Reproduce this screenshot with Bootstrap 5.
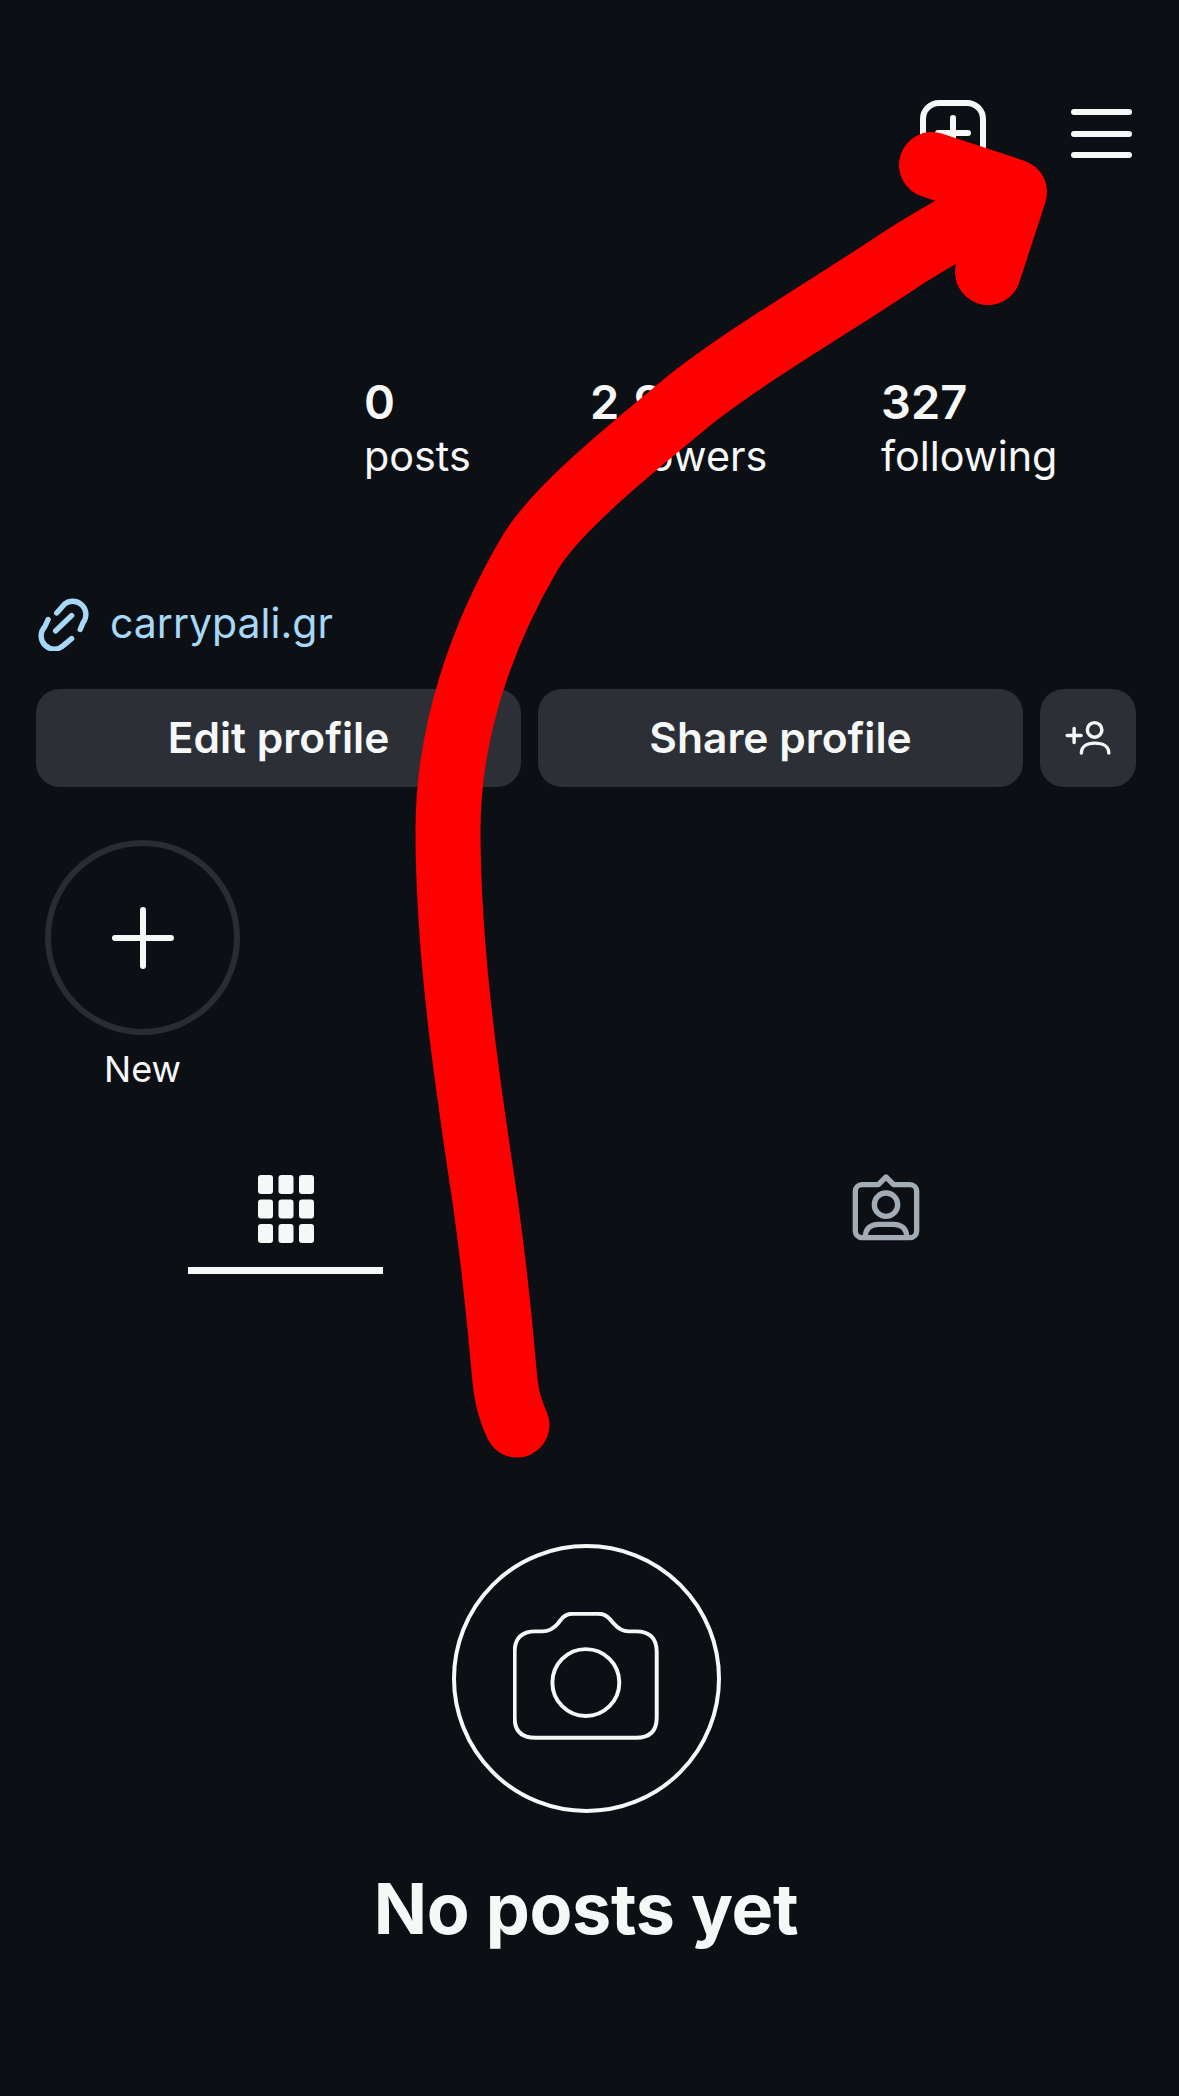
<!DOCTYPE html>
<html lang="en">

<head>
    <meta charset="UTF-8">
    <meta name="viewport" content="width=device-width, initial-scale=1.0">
    <title>Profile</title>
    <link rel="stylesheet" href="https://cdn.jsdelivr.net/npm/bootstrap@5.3.3/dist/css/bootstrap.min.css">
    <script src="https://cdn.jsdelivr.net/npm/bootstrap@5.3.3/dist/js/bootstrap.bundle.min.js"></script>
    <style>
        html, body { background: #0c1015; }
        body { font-family: Inter, "Liberation Sans", sans-serif; color: #f6f8f8; width: 1179px; height: 2096px; overflow: hidden; position: relative; }
        .top-icons { height: 100px; margin-top: 100px; padding-right: 47px; gap: 85px; }
        .hamburger { margin-top: 9px; }
        .stats { margin-top: 175px; padding-left: 364px; height: 110px; }
        .stat-num { font-size: 47px; font-weight: 600; line-height: 54px; }
        .stat-label { font-size: 41.3px; line-height: 54px; }
        .stat-a { width: 226px; }
        .stat-b { width: 291px; }
        .site-link { margin-top: 113px; padding-left: 36px; gap: 17px; height: 50px; color: #a8d8f8; font-size: 41px; line-height: 50px; }
        .btn-row { margin-top: 41px; padding-left: 36px; padding-right: 43px; gap: 17px; }
        .btn-dark-ig { background: #2c3036; color: #f6f8f8; border: 0; border-radius: 24px; height: 98px; font-size: 42.5px; font-weight: 600; padding: 0; }
        .btn-dark-ig:hover { background: #2c3036; color: #f6f8f8; }
        .btn-wide { width: 485px; }
        .btn-small { width: 96px; }
        .story-col { width: 195px; margin-left: 45px; margin-top: 53px; }
        .story-ring { width: 195px; height: 195px; border: 6px solid #292c31; border-radius: 50%; }
        .story-text { font-size: 36px; line-height: 40px; margin-top: 14px; }
        .tabs-row { margin-top: 86px; height: 99px; }
        .tab-one { width: 195px; margin-left: 188px; height: 99px; border-bottom: 7px solid #f6f8f8; }
        .tab-two { margin-left: 467px; margin-top: -3px; }
        .empty-col { margin-top: 270px; padding-right: 7px; }
        .empty-ring { width: 269px; height: 269px; border: 4.5px solid #f6f8f8; border-radius: 50%; }
        .camera-icon { margin-bottom: 6px; }
        .empty-title { font-size: 70px; font-weight: 700; line-height: 84px; margin-top: 54px; letter-spacing: -.3px; }
        .arrow-layer { position: absolute; left: 0; top: 0; pointer-events: none; }
    </style>
</head>

<body>
    <header class="d-flex justify-content-end align-items-start top-icons">
        <svg width="66" height="66" viewBox="0 0 66 66" fill="none" stroke="#f6f8f8" stroke-width="6" stroke-linecap="round">
            <rect x="3" y="3" width="60" height="60" rx="16"></rect>
            <path d="M33 18V48M18 33H48"></path>
        </svg>
        <svg class="hamburger" width="61" height="50" viewBox="0 0 61 50" fill="none" stroke="#f6f8f8" stroke-width="6" stroke-linecap="round">
            <path d="M3 3H58M3 25H58M3 46H58"></path>
        </svg>
    </header>

    <section class="d-flex stats">
        <div class="stat-a">
            <div class="stat-num">0</div>
            <div class="stat-label">posts</div>
        </div>
        <div class="stat-b">
            <div class="stat-num">2.9K</div>
            <div class="stat-label">followers</div>
        </div>
        <div>
            <div class="stat-num">327</div>
            <div class="stat-label">following</div>
        </div>
    </section>

    <div class="d-flex align-items-center site-link">
        <svg width="57" height="56" viewBox="50 50 160 156" fill="none" stroke="#a8d8f8" stroke-width="15" stroke-linecap="round">
            <path d="M108 100L130 75A37 37 0 0 1 182 127L174 146"></path>
            <path d="M150 172L128 190A37 37 0 0 1 75 138L84 118"></path>
            <path d="M105 150L150 107"></path>
        </svg>
        <span>carrypali.gr</span>
    </div>

    <div class="d-flex btn-row">
        <button type="button" class="btn btn-dark-ig btn-wide">Edit profile</button>
        <button type="button" class="btn btn-dark-ig btn-wide">Share profile</button>
        <button type="button" class="btn btn-dark-ig btn-small d-flex align-items-center justify-content-center">
            <svg width="50" height="38" viewBox="70 85 150 115" fill="none" stroke="#f6f8f8" stroke-width="10.5" stroke-linecap="round">
                <path d="M82 135H124M103 114V156"></path>
                <circle cx="165" cy="118" r="22"></circle>
                <path d="M125 188C125 168 142 158 166 158S208 168 208 188"></path>
            </svg>
        </button>
    </div>

    <div class="d-flex flex-column align-items-center story-col">
        <div class="story-ring d-flex align-items-center justify-content-center">
            <svg width="62" height="62" viewBox="0 0 62 62" fill="none" stroke="#f6f8f8" stroke-width="6" stroke-linecap="round">
                <path d="M31 3V59M3 31H59"></path>
            </svg>
        </div>
        <div class="story-text">New</div>
    </div>

    <nav class="d-flex tabs-row">
        <div class="tab-one d-flex justify-content-center align-items-start">
            <svg width="56" height="68" viewBox="0 0 56 68" fill="#f6f8f8">
                <rect x="0" y="0" width="15" height="19" rx="3"></rect><rect x="20.5" y="0" width="15" height="19" rx="3"></rect><rect x="41" y="0" width="15" height="19" rx="3"></rect>
                <rect x="0" y="24.5" width="15" height="19" rx="3"></rect><rect x="20.5" y="24.5" width="15" height="19" rx="3"></rect><rect x="41" y="24.5" width="15" height="19" rx="3"></rect>
                <rect x="0" y="49" width="15" height="19" rx="3"></rect><rect x="20.5" y="49" width="15" height="19" rx="3"></rect><rect x="41" y="49" width="15" height="19" rx="3"></rect>
            </svg>
        </div>
        <div class="tab-two">
            <svg width="72" height="71" viewBox="60 35 216 213" fill="none" stroke="#a3abb4" stroke-width="16" stroke-linejoin="round" stroke-linecap="round">
                <path d="M96 73H145L168 50L191 73H240A20 20 0 0 1 260 93V212A20 20 0 0 1 240 232H96A20 20 0 0 1 76 212V93A20 20 0 0 1 96 73Z"></path>
                <circle cx="168" cy="133" r="35"></circle>
                <path d="M106 230C106 205 122 192 145 192H191C214 192 230 205 230 230"></path>
            </svg>
        </div>
    </nav>

    <section class="d-flex flex-column align-items-center empty-col">
        <div class="empty-ring d-flex align-items-center justify-content-center">
            <svg class="camera-icon" width="146" height="128" viewBox="515 333 445 390" fill="none" stroke="#f6f8f8" stroke-width="12">
                <path d="M583 392H605C628 392 640 382 652 368C665 350 675 338 697 338H775C797 338 807 350 822 368C834 382 846 392 868 392H890Q953 392 953 455V655Q953 716 890 716H583Q520 716 520 655V455Q520 392 583 392Z"></path>
                <circle cx="737" cy="548" r="102"></circle>
            </svg>
        </div>
        <h1 class="empty-title">No posts yet</h1>
    </section>

    <!-- hand drawn arrow on top of the screenshot -->
    <svg class="arrow-layer" width="1179" height="2096" viewBox="0 0 1179 2096" fill="none" stroke="#ff0000" stroke-width="65" stroke-linecap="round" stroke-linejoin="round">
        <path d="M517 1425C508 1405 506 1393 504 1370C498 1300 492 1250 485 1200C470 1100 448 960 448 830C448 733 481 636 530 553C555 510 630 450 679 409C730 365 830 307 900 260C930 240 965 222 1000 200"></path>
        <path d="M932 165L1014 192L988 272" stroke-width="66"></path>
    </svg>
</body>

</html>
